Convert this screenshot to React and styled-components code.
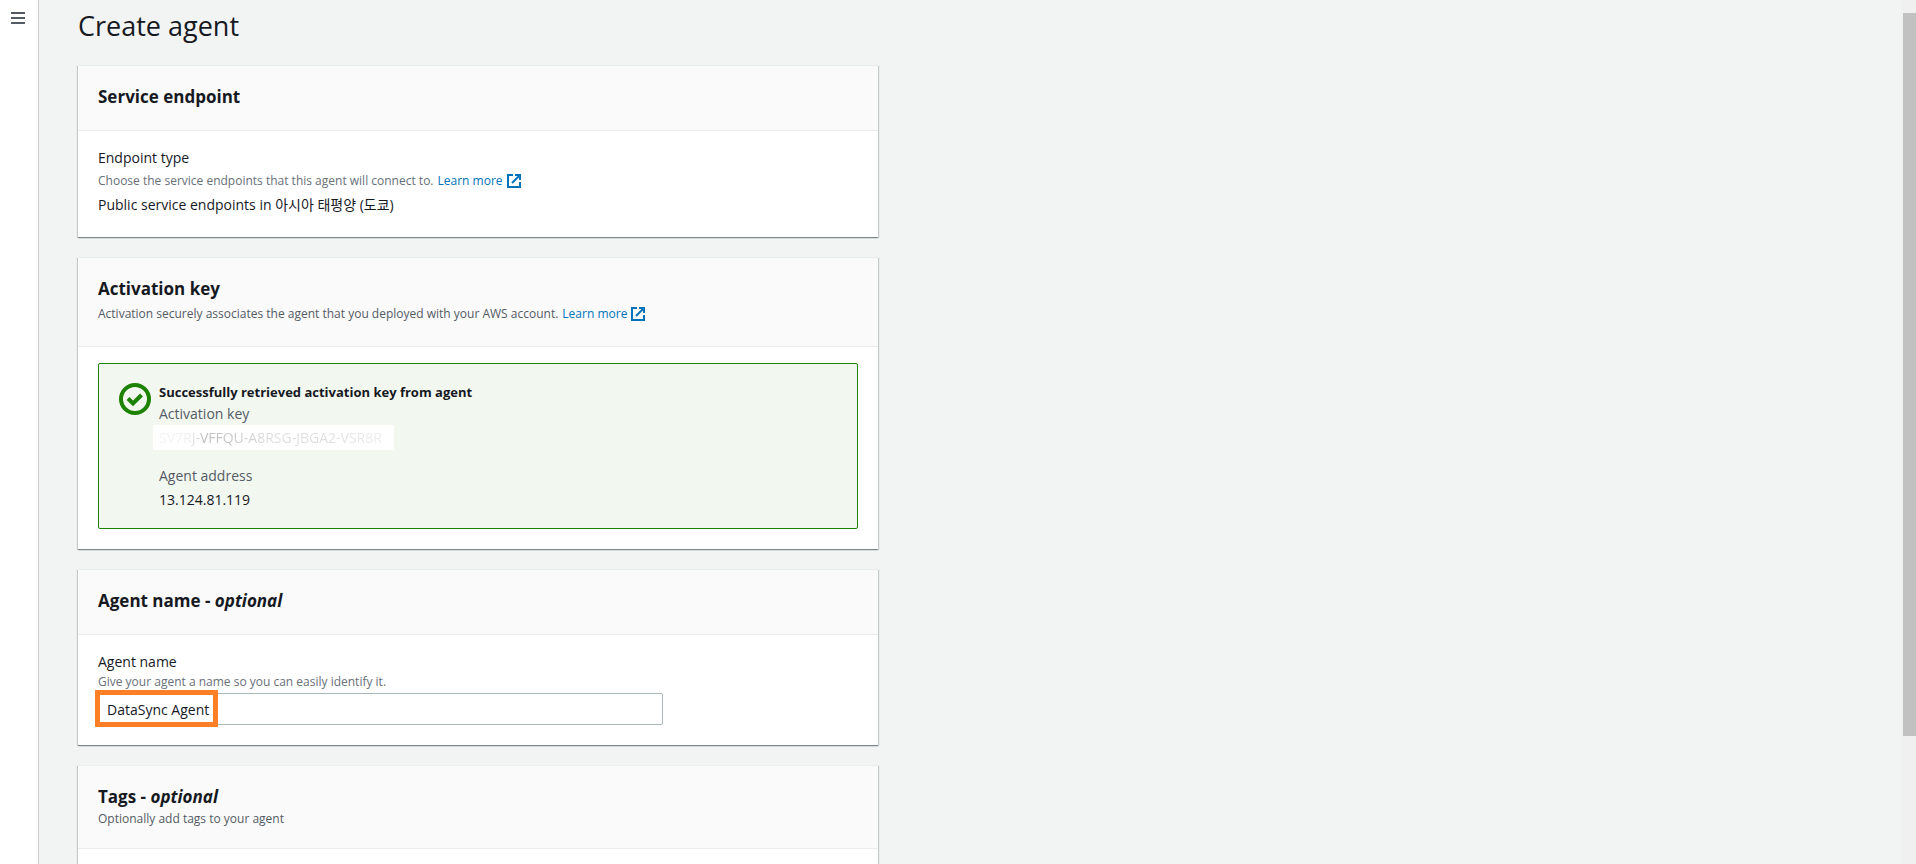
import { useState } from "react";
import styled, { createGlobalStyle } from "styled-components";

const GlobalStyle = createGlobalStyle`
    * {
        box-sizing: border-box;
    }
    body {
        margin: 0;
        background: #f2f3f3;
        color: #16191f;
        font-family: "Open Sans", "Noto Sans CJK KR", sans-serif;
        font-size: 14px;
        line-height: 22px;
    }
`

const Page = styled.div`
    display: flex;
    height: 100vh;
    overflow: hidden;
`

const SideRail = styled.nav`
    flex: none;
    width: 39px;
    padding: 12px 11px;
    background: #fff;
    border-right: 1px solid #ccc;
`

const MenuButton = styled.button`
    display: block;
    padding: 0;
    border: 0;
    background: none;
    color: #545b64;
    cursor: pointer;
    svg {
        display: block;
    }
`

const Content = styled.main`
    flex: 1;
    min-width: 0;
    padding: 8px 39px 0;
    overflow: hidden;
`

const Title = styled.h1`
    margin: 0 0 21px;
    font-size: 27px;
    font-weight: 400;
    line-height: 36px;
`

const Cards = styled.div`
    display: flex;
    flex-direction: column;
    gap: 20px;
    max-width: 800px;
`

const Card = styled.section`
    background: #fff;
    border-top: 1px solid #eaeded;
    box-shadow: 0 1px 1px 0 rgba(0, 28, 36, 0.3), 1px 1px 1px 0 rgba(0, 28, 36, 0.15),
        -1px 1px 1px 0 rgba(0, 28, 36, 0.15);
`

const CardHeader = styled.header`
    padding: 20px;
    background: #fafafa;
    border-bottom: 1px solid #eaeded;
`

const CardTitle = styled.h2`
    margin: 0 0 2px;
    font-size: 17px;
    font-weight: 700;
    line-height: 22px;
`

const CardBody = styled.div`
    padding: 16px 20px 20px;
    min-height: ${({ $minHeight }) => $minHeight || "0"};
`

const Hint = styled.p`
    display: flex;
    align-items: center;
    gap: 4px;
    margin: 0;
    font-size: 12px;
    line-height: ${({ $tall }) => ($tall ? "24px" : "18px")};
    color: ${({ $dark }) => ($dark ? "#545b64" : "#687078")};
`

const ExternalLink = styled.a`
    display: inline-flex;
    align-items: center;
    gap: 4px;
    color: #0073bb;
    text-decoration: none;
`

const FieldName = styled.div`
    color: ${({ $muted }) => ($muted ? "#545b64" : "inherit")};
`

const FieldValue = styled.div`
    line-height: ${({ $compact }) => ($compact ? "24px" : "25px")};
`

const Alert = styled.div`
    display: flex;
    gap: 8px;
    padding: 19px 19px 16px 20px;
    background: #f2f7f0;
    border: 1px solid #1d8102;
    border-radius: 2px;
    > svg {
        flex: none;
    }
`

const AlertTitle = styled.div`
    margin-bottom: 2px;
    font-size: 13px;
    font-weight: 700;
    line-height: 18px;
`

const MaskedKey = styled.div`
    width: 241px;
    height: 25px;
    margin: 0 0 15px -6px;
    padding-left: 6px;
    background: #fff;
    line-height: 25px;
    white-space: nowrap;
    overflow: hidden;
    span {
        background: linear-gradient(90deg, #f4f4f4 0%, #eee 14%, #bbb 20%, #ccc 36%, #ddd 50%, #ddd 75%, #eee 100%);
        background-clip: text;
        color: transparent;
    }
`

const Label = styled.label`
    display: block;
`

const InputRow = styled.div`
    position: relative;
    max-width: 565px;
    margin-top: 2px;
`

const TextInput = styled.input`
    display: block;
    width: 100%;
    height: 32px;
    padding: 0 8px;
    border: 1px solid #aab7b8;
    border-radius: 2px;
    background: #fff;
    color: #16191f;
    font: inherit;
`

// callout frame drawn over the start of the input
const Highlight = styled.div`
    position: absolute;
    top: -3px;
    left: -3px;
    width: 123px;
    height: 37px;
    border: 5px solid #ff7f27;
    pointer-events: none;
`

const ScrollTrack = styled.div`
    flex: none;
    width: 15px;
    padding: 13px 0 0 2px;
    background: #f0f0f0;
`

const ScrollThumb = styled.div`
    height: 85%;
    background: #c1c1c1;
`

const MenuIcon = () => (
    <svg width="14" height="12" viewBox="0 0 14 12" fill="currentColor">
        <path d="M0 0h14v2H0zM0 5h14v2H0zM0 10h14v2H0z" />
    </svg>
)

const ExternalIcon = () => (
    <svg width="14" height="14" viewBox="0 0 14 14" fill="none" stroke="currentColor" strokeWidth="2">
        <path d="M6 1H1v12h12V8" />
        <path d="M8 1h5v5M13 1L5 9" />
    </svg>
)

const SuccessIcon = () => (
    <svg width="32" height="32" viewBox="0 0 32 32" fill="none" stroke="#1d8102" strokeWidth="4">
        <circle cx="16" cy="16" r="14" />
        <path d="M9 15.5l5 5 8.5-8.5" />
    </svg>
)

const LearnMore = () => (
    <ExternalLink href="#">
        Learn more
        <ExternalIcon />
    </ExternalLink>
)

const App = () => {
    const [agentName, setAgentName] = useState("DataSync Agent");

    return (
        <Page>
            <GlobalStyle />
            <SideRail>
                <MenuButton type="button" aria-label="Open navigation">
                    <MenuIcon />
                </MenuButton>
            </SideRail>

            <Content>
                <Title>Create agent</Title>
                <Cards>
                    <Card>
                        <CardHeader>
                            <CardTitle>Service endpoint</CardTitle>
                        </CardHeader>
                        <CardBody>
                            <FieldName>Endpoint type</FieldName>
                            <Hint $tall>
                                Choose the service endpoints that this agent will connect to.
                                <LearnMore />
                            </Hint>
                            <FieldValue $compact>Public service endpoints in 아시아 태평양 (도쿄)</FieldValue>
                        </CardBody>
                    </Card>

                    <Card>
                        <CardHeader>
                            <CardTitle>Activation key</CardTitle>
                            <Hint $tall $dark>
                                Activation securely associates the agent that you deployed with your AWS account.
                                <LearnMore />
                            </Hint>
                        </CardHeader>
                        <CardBody>
                            <Alert>
                                <SuccessIcon />
                                <div>
                                    <AlertTitle>Successfully retrieved activation key from agent</AlertTitle>
                                    <FieldName $muted>Activation key</FieldName>
                                    <MaskedKey>
                                        <span>SV7RJ-VFFQU-A8RSG-JBGA2-VSR8R</span>
                                    </MaskedKey>
                                    <FieldName $muted>Agent address</FieldName>
                                    <FieldValue>13.124.81.119</FieldValue>
                                </div>
                            </Alert>
                        </CardBody>
                    </Card>

                    <Card>
                        <CardHeader>
                            <CardTitle>Agent name - <em>optional</em></CardTitle>
                        </CardHeader>
                        <CardBody>
                            <Label htmlFor="agent-name">Agent name</Label>
                            <Hint id="agent-name-hint">Give your agent a name so you can easily identify it.</Hint>
                            <InputRow>
                                <TextInput
                                    id="agent-name"
                                    type="text"
                                    aria-describedby="agent-name-hint"
                                    value={agentName}
                                    onChange={(e) => setAgentName(e.target.value)}
                                />
                                <Highlight />
                            </InputRow>
                        </CardBody>
                    </Card>

                    <Card>
                        <CardHeader>
                            <CardTitle>Tags - <em>optional</em></CardTitle>
                            <Hint $dark>Optionally add tags to your agent</Hint>
                        </CardHeader>
                        <CardBody $minHeight="120px" />
                    </Card>
                </Cards>
            </Content>

            <ScrollTrack>
                <ScrollThumb />
            </ScrollTrack>
        </Page>
    )
}

export default App
